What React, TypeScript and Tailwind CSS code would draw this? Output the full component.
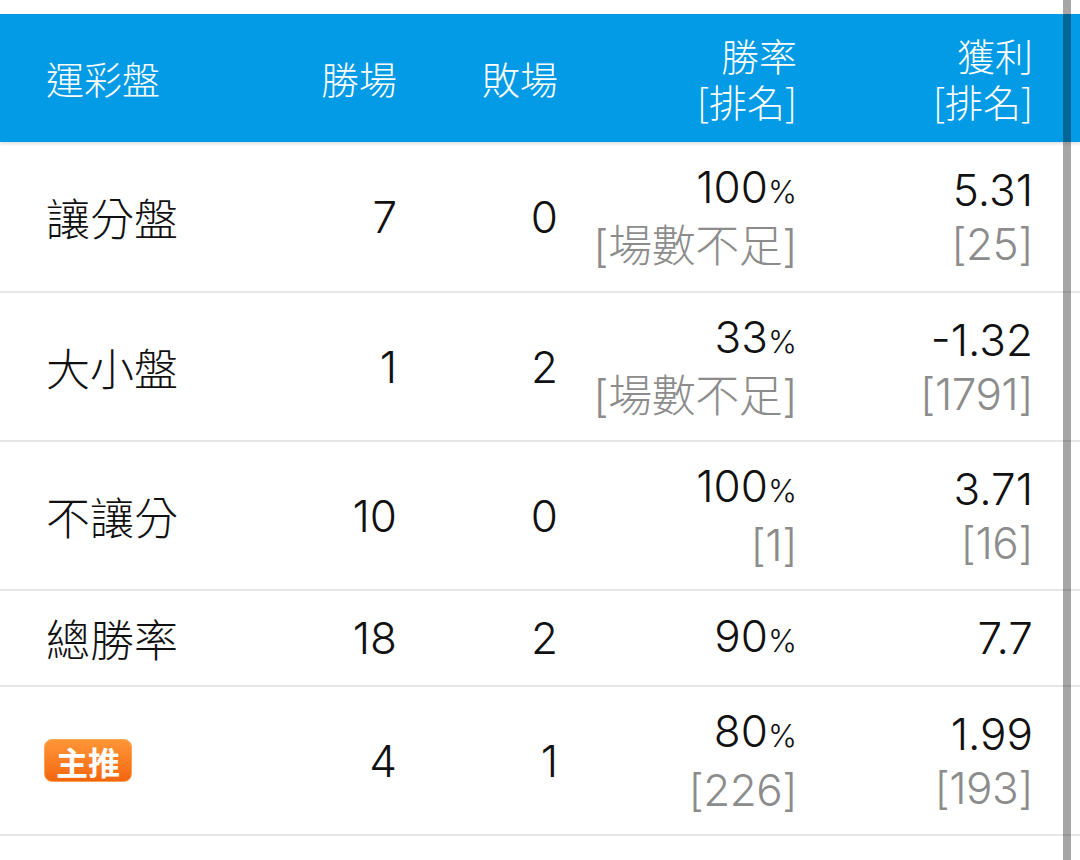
const cjk = { fontFamily: '"Noto Sans CJK TC", "Noto Sans", sans-serif' };
const num = { fontFamily: 'Inter, "Noto Sans CJK TC", sans-serif' };

type Row = {
  label: string;
  win: string;
  lose: string;
  rate: string;
  rateRank?: string;
  profit: string;
  profitRank?: string;
  h: string;
  badge?: boolean;
};

const rows: Row[] = [
  { label: "讓分盤", win: "7", lose: "0", rate: "100", rateRank: "[場數不足]", profit: "5.31", profitRank: "[25]", h: "h-[151px]" },
  { label: "大小盤", win: "1", lose: "2", rate: "33", rateRank: "[場數不足]", profit: "-1.32", profitRank: "[1791]", h: "h-[149px]" },
  { label: "不讓分", win: "10", lose: "0", rate: "100", rateRank: "[1]", profit: "3.71", profitRank: "[16]", h: "h-[149px]" },
  { label: "總勝率", win: "18", lose: "2", rate: "90", profit: "7.7", h: "h-[96px]" },
  { label: "主推", win: "4", lose: "1", rate: "80", rateRank: "[226]", profit: "1.99", profitRank: "[193]", h: "h-[149px]", badge: true },
];

const grid = "grid grid-cols-[258px_93px_161px_239px_236px] items-center pl-[46px]";

const Rank = ({ v }: { v?: string }) =>
  v ? <div className="text-[#8c8c8c] font-light tracking-[-0.5px]">{v}</div> : null;

export default function App() {
  return (
    <div className="relative w-[1080px] h-[860px] overflow-hidden bg-white">
      <div className="h-[14px]" />
      <div
        className={`${grid} h-[128px] bg-[#039be5] text-white text-[38px] leading-[46px] font-light shadow-[0_2px_3px_rgba(0,0,0,0.12)] relative z-10`}
        style={cjk}
      >
        <div>運彩盤</div>
        <div className="text-right">勝場</div>
        <div className="text-right">敗場</div>
        <div className="text-right">
          勝率
          <br />
          [排名]
        </div>
        <div className="text-right">
          獲利
          <br />
          [排名]
        </div>
      </div>

      {rows.map((r) => (
        <div
          key={r.label}
          className={`${grid} ${r.h} border-b-2 border-[#e6e6e6] text-[44px] leading-[54px] text-[#111]`}
          style={num}
        >
          {r.badge ? (
            <div style={cjk}>
              <div className="flex items-center justify-center w-[88px] h-[43px] rounded-[8px] border border-[#fba454] bg-gradient-to-b from-[#ff9636] to-[#f2650d] text-white text-[32px] leading-none font-bold ml-[-2px]">
                {r.label}
              </div>
            </div>
          ) : (
            <div style={cjk} className="font-light">
              {r.label}
            </div>
          )}
          <div className="text-right font-light">{r.win}</div>
          <div className="text-right font-light">{r.lose}</div>
          <div className="text-right">
            <div className="font-light">
              {r.rate}
              <span className="text-[31px]">%</span>
            </div>
            <Rank v={r.rateRank} />
          </div>
          <div className="text-right">
            <div className="font-light">{r.profit}</div>
            <Rank v={r.profitRank} />
          </div>
        </div>
      ))}

      {/* scrollbar */}
      <div className="absolute left-[1063px] top-0 w-[8px] h-[860px] bg-black/35 z-20" />
    </div>
  );
}
